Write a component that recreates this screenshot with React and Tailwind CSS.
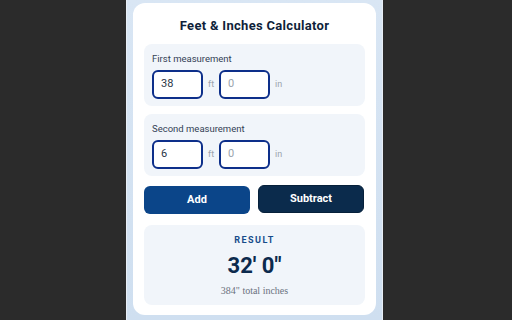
export default function App() {
  const font = { fontFamily: "Roboto, 'Noto Sans', sans-serif" };

  return (
    <div className="w-[512px] h-[320px] bg-[#2b2b2b] flex pl-[126px]" style={font}>
      <div className="w-[257px] h-full bg-gradient-to-b from-[#d9e6f4] to-[#cfdff0] border-x border-[#e8eef6] px-[6px] pt-[3px]">
        <div className="bg-white rounded-[12px] h-[312px] px-[11px] pt-[13px] flex flex-col">
          <h1 className="text-center text-[13px] font-bold text-[#0f1f3a] leading-[20px] tracking-[0.3px]">
            Feet &amp; Inches Calculator
          </h1>

          <Measurement className="mt-[8px]" label="First measurement" feet="38" />
          <Measurement className="mt-[8px]" label="Second measurement" feet="6" />

          <div className="mt-[10px] flex gap-[8px]">
            <button className="w-[106px] h-[28px] rounded-[6px] bg-[#0b4589] text-white text-[11px] font-bold">
              Add
            </button>
            <button className="w-[106px] h-[28px] rounded-[6px] bg-[#0b2b4c] border border-[#06203a] text-white text-[11px] font-bold -mt-[1px]">
              Subtract
            </button>
          </div>

          <div className="mt-[11px] h-[80px] rounded-[8px] bg-[#f1f5fa] flex flex-col items-center pt-[9px]">
            <div className="text-[9px] font-bold tracking-[1.5px] text-[#174c8a] leading-[12px]">RESULT</div>
            <div className="mt-[7px] text-[22px] font-bold text-[#0c2a4d] leading-[26px]">32&apos; 0&quot;</div>
            <div
              className="mt-[6px] text-[10px] text-[#6b7280] leading-[12px]"
              style={{ fontFamily: "'Liberation Serif', serif" }}
            >
              384&quot; total inches
            </div>
          </div>
        </div>
      </div>
    </div>
  );
}

function Measurement({ label, feet, className }) {
  return (
    <div className={`${className} h-[62px] rounded-[8px] bg-[#f1f5fa] px-[8px] pt-[9px]`}>
      <div className="text-[9.5px] text-[#334155] leading-[12px]">{label}</div>
      <div className="mt-[5px] flex items-center">
        <div className="w-[51px] h-[29px] rounded-[6px] border-2 border-[#0d2f8a] bg-white flex items-center px-[7px] text-[11px] text-[#2a3646]">
          {feet}
        </div>
        <span className="ml-[5px] text-[9px] text-[#9aa3ad]">ft</span>
        <div className="ml-[5px] w-[51px] h-[29px] rounded-[6px] border-2 border-[#0d2f8a] bg-white flex items-center px-[7px] text-[11px] text-[#9aa3ad]">
          0
        </div>
        <span className="ml-[5px] text-[9px] text-[#9aa3ad]">in</span>
      </div>
    </div>
  );
}
